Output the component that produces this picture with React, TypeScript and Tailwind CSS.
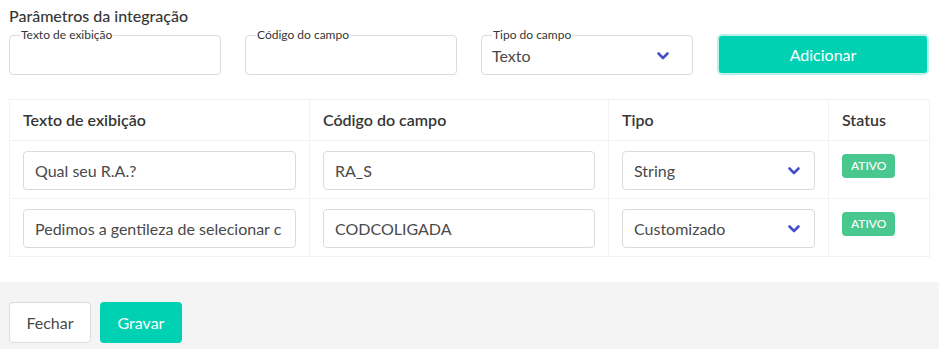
import React from "react";

const FONT = "font-['Lato','Noto_Sans',sans-serif]";

function Chevron() {
  return (
    <svg width="14" height="14" viewBox="0 0 14 14" className="shrink-0">
      <path d="M2.5 4.5 L7 9 L11.5 4.5" fill="none" stroke="#4650c8" strokeWidth="2.6" strokeLinecap="round" strokeLinejoin="round" />
    </svg>
  );
}

function Field({ label, value, select }: { label: string; value?: string; select?: boolean }) {
  return (
    <fieldset className="m-0 min-w-0 rounded border border-[#dbdbdb] px-[10px] pb-[3px] pt-0">
      <legend className="ml-0 px-[1px] text-[12px] leading-[12px] text-[#363636]">{label}</legend>
      <div className="flex h-[30px] items-center justify-between">
        <span className="text-[16px] text-[#4a4a4a]">{value ?? ""}</span>
        {select && <span className="mr-[12px]"><Chevron /></span>}
      </div>
    </fieldset>
  );
}

function CellInput({ value, select }: { value: string; select?: boolean }) {
  return (
    <div className="flex h-[39px] items-center justify-between overflow-hidden rounded border border-[#dbdbdb] bg-white pl-[11px] pr-[13px]">
      <span className="whitespace-nowrap text-[16px] text-[#4a4a4a]">{value}</span>
      {select && <Chevron />}
    </div>
  );
}

const rows = [
  { text: "Qual seu R.A.?", code: "RA_S", tipo: "String" },
  { text: "Pedimos a gentileza de selecionar c", code: "CODCOLIGADA", tipo: "Customizado" },
];

export default function App() {
  return (
    <div className={`${FONT} h-[349px] w-[939px] overflow-hidden bg-white`}>
      <div className="px-[9px] pt-[5px]">
        <h2 className="text-[16px] font-medium leading-[22px] text-[#363636]">Parâmetros da integração</h2>

        <div className="mt-[2px] grid grid-cols-4 items-center gap-6 pr-[1px]">
          <Field label="Texto de exibição" />
          <Field label="Código do campo" />
          <Field label="Tipo do campo" value="Texto" select />
          <button className="mt-[5px] h-[41px] rounded-[5px] border-2 border-[#b8f1e8] bg-[#00d1b2] text-[16px] text-white">
            Adicionar
          </button>
        </div>

        <table className="mt-[24px] w-[920px] table-fixed border-collapse">
          <colgroup>
            <col className="w-[300px]" />
            <col className="w-[299px]" />
            <col className="w-[220px]" />
            <col className="w-[101px]" />
          </colgroup>
          <thead>
            <tr className="h-[41px]">
              {["Texto de exibição", "Código do campo", "Tipo", "Status"].map((h) => (
                <th key={h} className="border border-[#f2f2f2] px-[13px] text-left text-[16px] font-semibold text-[#363636]">
                  {h}
                </th>
              ))}
            </tr>
          </thead>
          <tbody>
            {rows.map((r) => (
              <tr key={r.code} className="h-[58px]">
                <td className="border border-[#f2f2f2] px-[13px] pb-[8px] pt-[10px] align-top">
                  <CellInput value={r.text} />
                </td>
                <td className="border border-[#f2f2f2] px-[13px] pb-[8px] pt-[10px] align-top">
                  <CellInput value={r.code} />
                </td>
                <td className="border border-[#f2f2f2] px-[13px] pb-[8px] pt-[10px] align-top">
                  <CellInput value={r.tipo} select />
                </td>
                <td className="border border-[#f2f2f2] px-[13px] pt-[11px] align-top">
                  <span className="inline-flex h-[24px] items-center rounded-[4px] bg-[#48c78e] px-[9px] text-[12px] font-medium text-white">
                    ATIVO
                  </span>
                </td>
              </tr>
            ))}
          </tbody>
        </table>
      </div>

      <div className="mt-[25px] flex gap-[9px] bg-[#f4f4f4] px-[9px] pb-[10px] pt-[20px]">
        <button className="h-[41px] w-[82px] rounded-[4px] border border-[#dbdbdb] bg-white text-[16px] text-[#4a4a4a]">
          Fechar
        </button>
        <button className="h-[41px] w-[82px] rounded-[4px] bg-[#00d1b2] text-[16px] text-white">Gravar</button>
      </div>
    </div>
  );
}
